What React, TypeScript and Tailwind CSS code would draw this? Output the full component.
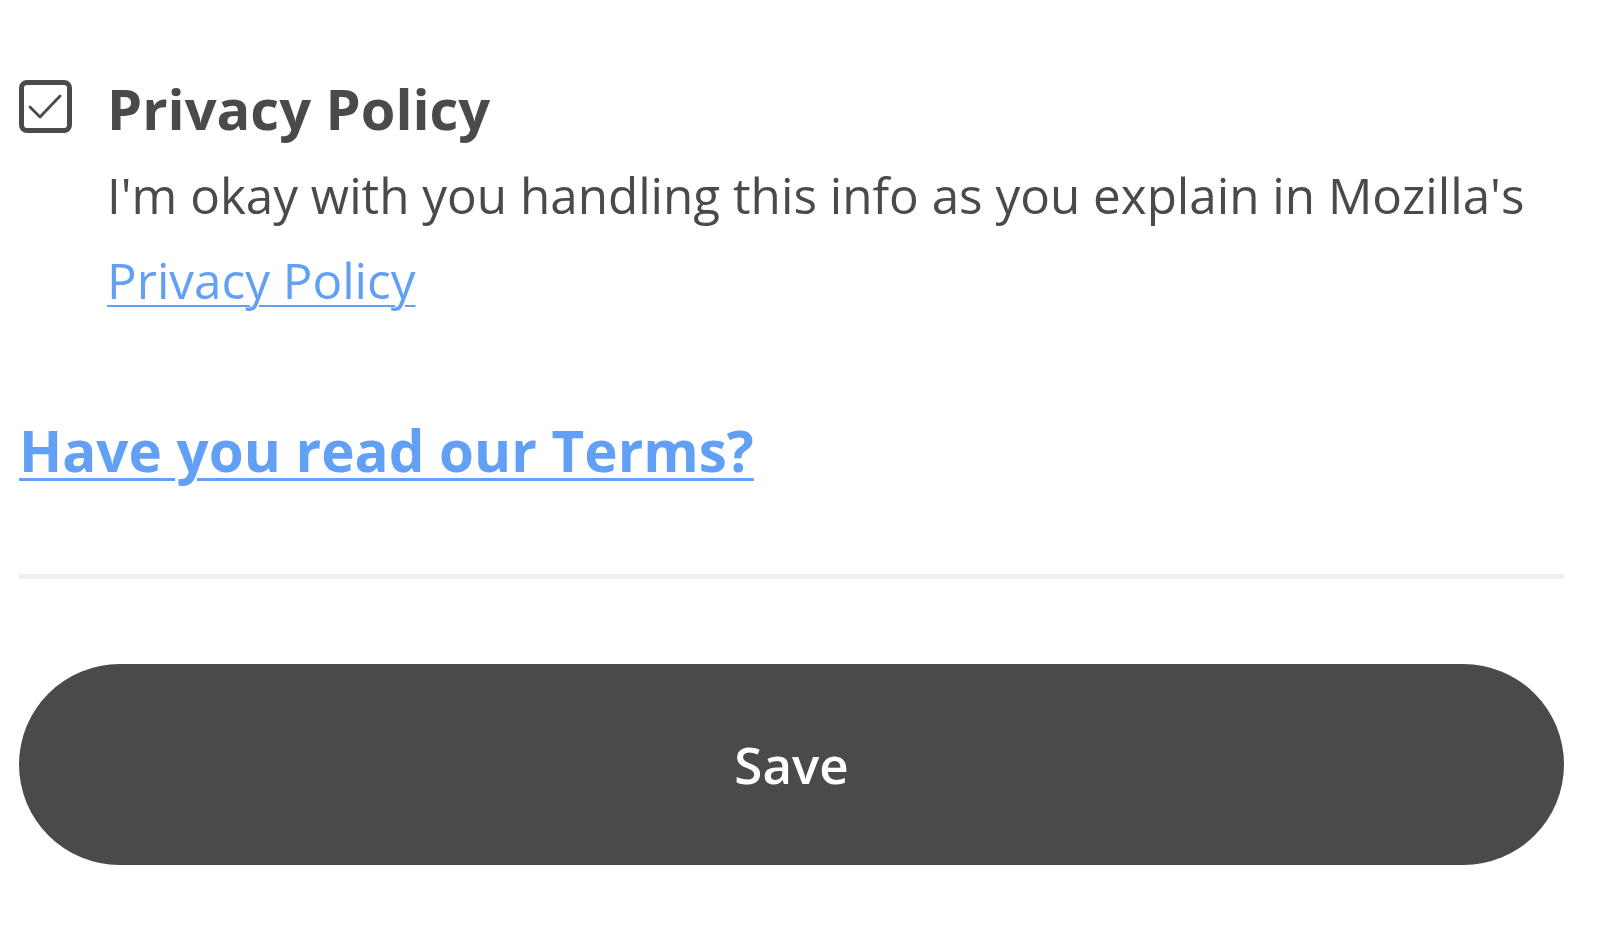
import React from "react";

export default function App() {
  return (
    <div className="min-h-[925px] w-full bg-white pl-[19px] pr-[36px] pt-[75px] text-[#4a4a4a] [font-family:'Open_Sans',sans-serif]">
      <div className="flex items-start gap-[35px]">
        <svg width="53" height="53" viewBox="0 0 53 53" className="mt-[5px] shrink-0">
          <rect x="2.5" y="2.5" width="48" height="48" rx="5.5" fill="none" stroke="#4a4a4a" strokeWidth="5" />
          <path d="M11 27 L21 37 L41 16" fill="none" stroke="#4a4a4a" strokeWidth="2.8" strokeLinecap="round" strokeLinejoin="round" />
        </svg>
        <div className="flex flex-col">
          <h2 className="text-[56px] font-bold leading-[1.2]">Privacy Policy</h2>
          <p className="mt-[10px] text-[49.4px] leading-[85px]">
            I'm okay with you handling this info as you explain in Mozilla's{" "}
            <a href="#" className="text-[#62a0f6] underline decoration-[2px] underline-offset-[6px]">
              Privacy Policy
            </a>
          </p>
        </div>
      </div>
      <h2 className="mt-[95px] text-[56.5px] font-bold leading-[1.2]">
        <a href="#" className="text-[#62a0f6] underline decoration-[3px] underline-offset-[6px]">
          Have you read our Terms?
        </a>
      </h2>
      <div className="mt-[89px] h-[5px] w-full bg-[#eeeeee]" />
      <button className="mt-[85px] flex h-[201px] w-full items-center justify-center rounded-full bg-[#4a4a4a] text-[51px] font-semibold text-white">
        Save
      </button>
    </div>
  );
}
